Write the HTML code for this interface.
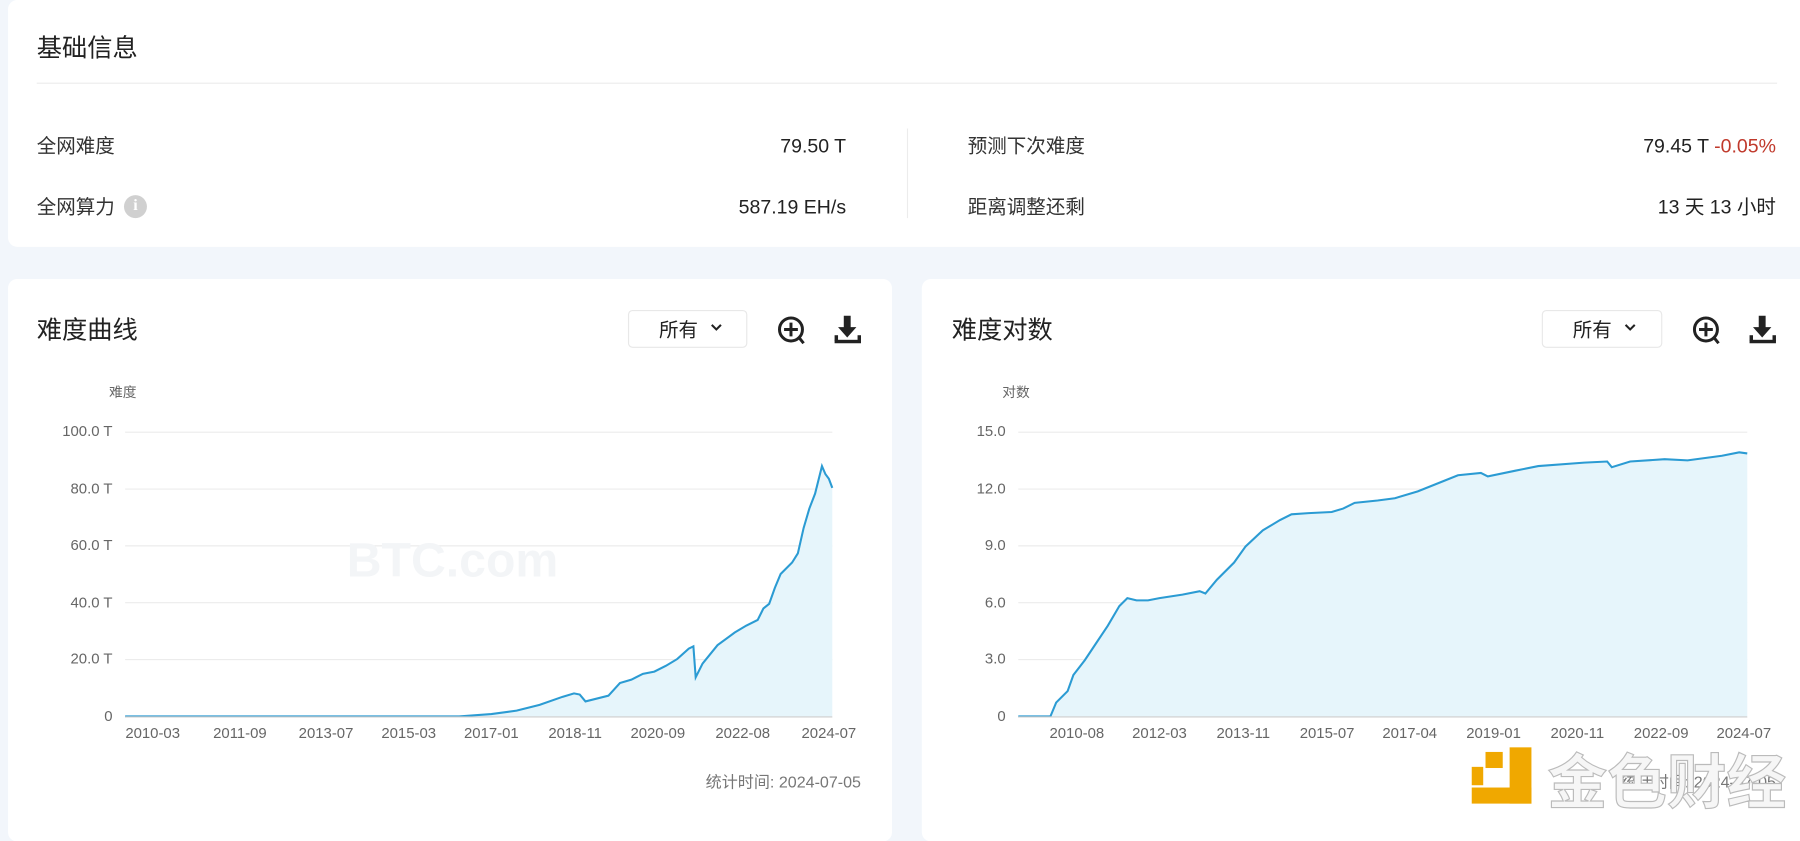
<!DOCTYPE html>
<html><head><meta charset="utf-8"><style>
html,body{margin:0;padding:0;width:1800px;height:822px;overflow:hidden;background:#f2f6fb}
#w{position:absolute;left:0;top:0;width:1568px;height:716px;transform:scale(1.148);transform-origin:0 0;font-family:"Liberation Sans","Noto Sans CJK SC",sans-serif;color:#222}
.card{position:absolute;background:#fff;border-radius:8px}
.a{position:absolute;white-space:nowrap}
.lbl{font-size:17px;color:#333}
.val{font-size:17px;color:#222;text-align:right}
.title{font-size:22px;color:#222}
.dd{position:absolute;border:1px solid #e8e8e8;border-radius:4px;font-size:17px;box-sizing:border-box}
</style></head><body><div id="w">
<div class="card" style="left:7px;top:0;width:1580px;height:215px"></div>
<div class="a title" style="left:32px;top:24px">基础信息</div>
<div class="a" style="left:32px;top:72px;width:1516px;height:1px;background:#ececec"></div>
<div class="a lbl" style="left:32px;top:113px">全网难度</div>
<div class="a val" style="right:831px;top:118px">79.50 T</div>
<div class="a lbl" style="left:32px;top:166px">全网算力</div>
<div class="a" style="left:108px;top:170px;width:20px;height:20px;border-radius:50%;background:#d0d0d0;color:#fff;font-size:14px;font-weight:bold;text-align:center;line-height:20px;font-family:'Liberation Serif',serif">i</div>
<div class="a val" style="right:831px;top:171px">587.19 EH/s</div>
<div class="a" style="left:790px;top:112px;width:1px;height:78px;background:#ececec"></div>
<div class="a lbl" style="left:843px;top:113px">预测下次难度</div>
<div class="a val" style="right:21px;top:118px">79.45 T <span style="color:#c0392b">-0.05%</span></div>
<div class="a lbl" style="left:843px;top:166px">距离调整还剩</div>
<div class="a val" style="right:21px;top:166px">13 天 13 小时</div>

<div class="card" style="left:7px;top:243px;width:770px;height:490px"></div>
<div class="card" style="left:803px;top:243px;width:780px;height:490px"></div>

<div class="a title" style="left:32px;top:270px">难度曲线</div>
<div class="dd" style="left:547px;top:270px;width:104px;height:33px;padding:2px 0 0 26px">所有</div>
<div class="a title" style="left:829px;top:270px">难度对数</div>
<div class="dd" style="left:1343px;top:270px;width:105px;height:33px;padding:2px 0 0 26px">所有</div>

<svg class="a" style="left:0;top:0" width="1568" height="716">
<g fill="none" stroke="#222" stroke-width="1.8"><path d="M620 283l4 4 4-4M1416 283l4 4 4-4"/></g>
<g fill="none" stroke="#222" stroke-width="2.6">
<circle cx="689" cy="287" r="10"/><path d="M689 281v12M683 287h12M696 294l4 5"/>
<circle cx="1486" cy="287" r="10"/><path d="M1486 281v12M1480 287h12M1493 294l4 5"/>
</g>
<g fill="#222">
<path d="M735 275h6v10h5l-8 9-8-9h5z"/><rect x="727" y="296" width="23" height="3"/><rect x="727" y="292" width="3" height="5"/><rect x="747" y="292" width="3" height="5"/>
<path d="M1532 275h6v10h5l-8 9-8-9h5z"/><rect x="1524" y="296" width="23" height="3"/><rect x="1524" y="292" width="3" height="5"/><rect x="1544" y="292" width="3" height="5"/>
</g>
<g font-size="12" fill="#666" font-family="Liberation Sans,Noto Sans CJK SC,sans-serif">
<text x="95" y="346">难度</text><text x="873" y="346">对数</text>
</g>
<g stroke="#ececec" stroke-width="1">
<path d="M109 376.5H725M109 426H725M109 475.5H725M109 525H725M109 574.5H725"/>
<path d="M887 376.5H1522M887 426H1522M887 475.5H1522M887 525H1522M887 574.5H1522"/>
</g>
<g font-size="42" font-weight="bold" fill="#f3f5f7" font-family="Liberation Sans,sans-serif">
<text x="302" y="502">BTC.com</text><text x="1099" y="502">BTC.com</text>
</g>
<path d="M109 624H400L428 622L450 619L470 614L490 607L500 604L505 605L510 611L530 606L540 595L550 592L560 587L570 585L580 580L590 574L600 565L604 563L606 590L612 578L625 562L640 551L650 545L660 540L665 530L670 526L675 512L680 500L690 490L695 482L700 460L705 443L710 430L713 418L716 406L719 413L722 417L725 425V624Z" fill="#e6f5fb"/>
<path d="M109 624H400L428 622L450 619L470 614L490 607L500 604L505 605L510 611L530 606L540 595L550 592L560 587L570 585L580 580L590 574L600 565L604 563L606 590L612 578L625 562L640 551L650 545L660 540L665 530L670 526L675 512L680 500L690 490L695 482L700 460L705 443L710 430L713 418L716 406L719 413L722 417L725 425" fill="none" stroke="#2b9bd3" stroke-width="1.8"/>
<path d="M887 624H915L920 612L930 602L935 588L945 575L955 560L965 545L975 528L982 521L990 523L1000 523L1010 521L1030 518L1045 515L1050 517L1060 505L1075 490L1085 476L1100 462L1115 453L1125 448L1140 447L1160 446L1170 443L1180 438L1200 436L1215 434L1235 428L1260 418L1270 414L1290 412L1296 415L1320 410L1340 406L1380 403L1400 402L1404 407L1420 402L1450 400L1470 401L1500 397L1515 394L1522 395V624Z" fill="#e6f5fb"/>
<path d="M887 624H915L920 612L930 602L935 588L945 575L955 560L965 545L975 528L982 521L990 523L1000 523L1010 521L1030 518L1045 515L1050 517L1060 505L1075 490L1085 476L1100 462L1115 453L1125 448L1140 447L1160 446L1170 443L1180 438L1200 436L1215 434L1235 428L1260 418L1270 414L1290 412L1296 415L1320 410L1340 406L1380 403L1400 402L1404 407L1420 402L1450 400L1470 401L1500 397L1515 394L1522 395" fill="none" stroke="#2b9bd3" stroke-width="1.8"/>
<g stroke="#ccc"><path d="M109 624.5H725M887 624.5H1522"/></g>
<g font-size="13" fill="#666" text-anchor="end" font-family="Liberation Sans,sans-serif">
<text x="98" y="380">100.0 T</text><text x="98" y="430">80.0 T</text><text x="98" y="479">60.0 T</text><text x="98" y="529">40.0 T</text><text x="98" y="578">20.0 T</text><text x="98" y="628">0</text>
<text x="876" y="380">15.0</text><text x="876" y="430">12.0</text><text x="876" y="479">9.0</text><text x="876" y="529">6.0</text><text x="876" y="578">3.0</text><text x="876" y="628">0</text>
</g>
<g font-size="13" fill="#666" text-anchor="middle" font-family="Liberation Sans,sans-serif">
<text x="133" y="643">2010-03</text><text x="209" y="643">2011-09</text><text x="284" y="643">2013-07</text><text x="356" y="643">2015-03</text><text x="428" y="643">2017-01</text><text x="501" y="643">2018-11</text><text x="573" y="643">2020-09</text><text x="647" y="643">2022-08</text><text x="722" y="643">2024-07</text>
<text x="938" y="643">2010-08</text><text x="1010" y="643">2012-03</text><text x="1083" y="643">2013-11</text><text x="1156" y="643">2015-07</text><text x="1228" y="643">2017-04</text><text x="1301" y="643">2019-01</text><text x="1374" y="643">2020-11</text><text x="1447" y="643">2022-09</text><text x="1519" y="643">2024-07</text>
</g>
<g font-size="14" fill="#777" text-anchor="end" font-family="Liberation Sans,Noto Sans CJK SC,sans-serif">
<text x="750" y="686">统计时间: 2024-07-05</text><text x="1547" y="686">统计时间: 2024-07-05</text>
</g>
<g fill="#f0a800">
<rect x="1315" y="651" width="19" height="49"/><rect x="1282" y="686" width="52" height="14"/><rect x="1294" y="655" width="15" height="14"/><rect x="1282" y="668" width="10" height="16"/>
</g>
<text x="1348" y="700" font-size="52" font-weight="bold" fill="#f6f6f6" stroke="#bbb" stroke-width="1" font-family="Noto Sans CJK SC,sans-serif">金色财经</text>
</svg>
</div></body></html>
